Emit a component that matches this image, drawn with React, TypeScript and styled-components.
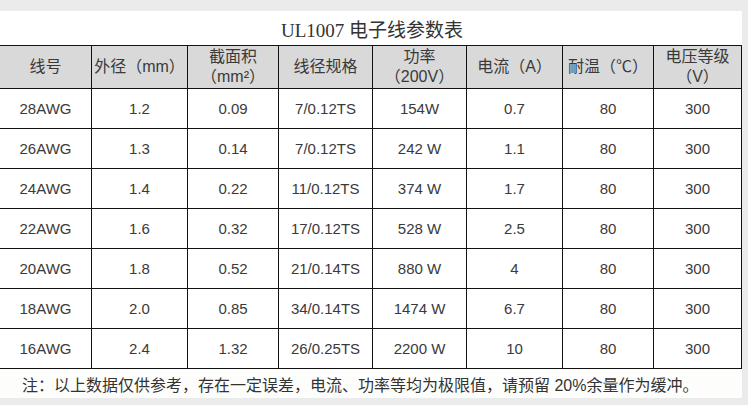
import { createGlobalStyle } from "styled-components";
import styled from "styled-components";

const GlobalStyle = createGlobalStyle`
  html, body {
    margin: 0;
    padding: 0;
    background: #ebebeb;
  }
  body {
    width: 748px;
    height: 405px;
    overflow: hidden;
  }
`;

const COLS = [92, 96, 91, 94, 94, 96, 91, 88];

const headers: string[][] = [
  ["线号"],
  ["外径（mm）"],
  ["截面积", "（mm²）"],
  ["线径规格"],
  ["功率", "（200V）"],
  ["电流（A）"],
  ["耐温（℃）"],
  ["电压等级", "（V）"],
];

const rows: string[][] = [
  ["28AWG", "1.2", "0.09", "7/0.12TS", "154W", "0.7", "80", "300"],
  ["26AWG", "1.3", "0.14", "7/0.12TS", "242 W", "1.1", "80", "300"],
  ["24AWG", "1.4", "0.22", "11/0.12TS", "374 W", "1.7", "80", "300"],
  ["22AWG", "1.6", "0.32", "17/0.12TS", "528 W", "2.5", "80", "300"],
  ["20AWG", "1.8", "0.52", "21/0.14TS", "880 W", "4", "80", "300"],
  ["18AWG", "2.0", "0.85", "34/0.14TS", "1474 W", "6.7", "80", "300"],
  ["16AWG", "2.4", "1.32", "26/0.25TS", "2200 W", "10", "80", "300"],
];

const Page = styled.div`
  padding-top: 11px;
  width: 742px;
`;

const Panel = styled.div`
  background: #ffffff;
  height: 387px;
  display: flex;
  flex-direction: column;
`;

const Title = styled.div`
  height: 34px;
  display: flex;
  align-items: center;
  justify-content: center;
  padding-left: 2px;
  box-sizing: border-box;
  font-family: "Liberation Serif", "Noto Sans CJK SC", serif;
  font-size: 19px;
  color: #333;
`;

const Grid = styled.div`
  display: grid;
  grid-template-columns: ${COLS.map((w) => `${w}px`).join(" ")};
  grid-template-rows: 43px repeat(${rows.length}, 40px);
  border-top: 1px solid #111;
`;

const Cell = styled.div<{ $head?: boolean }>`
  box-sizing: border-box;
  border-right: 1px solid #111;
  border-bottom: 1px solid #111;
  background: ${(p) => (p.$head ? "#d9d9d9" : "#ffffff")};
  display: flex;
  flex-direction: column;
  align-items: center;
  justify-content: center;
  font-family: "Liberation Sans", "Noto Sans CJK SC", sans-serif;
  font-size: ${(p) => (p.$head ? "16px" : "15px")};
  line-height: 20px;
  color: #3a3a3a;
  white-space: nowrap;
`;

const Note = styled.div`
  flex: 1;
  display: flex;
  align-items: center;
  padding-left: 22px;
  padding-top: 1px;
  font-family: "Liberation Sans", "Noto Sans CJK SC", sans-serif;
  font-size: 16px;
  color: #333;
  white-space: nowrap;
  background: #fdfdfc;
`;

export default function App() {
  return (
    <Page>
      <GlobalStyle />
      <Panel>
        <Title>UL1007 电子线参数表</Title>
        <Grid>
          {headers.map((lines, i) => (
            <Cell key={`h${i}`} $head>
              {lines.map((l, j) => (
                <span key={j}>{l}</span>
              ))}
            </Cell>
          ))}
          {rows.map((row, r) =>
            row.map((v, c) => <Cell key={`${r}-${c}`}>{v}</Cell>)
          )}
        </Grid>
        <Note>注：以上数据仅供参考，存在一定误差，电流、功率等均为极限值，请预留 20%余量作为缓冲。</Note>
      </Panel>
    </Page>
  );
}
